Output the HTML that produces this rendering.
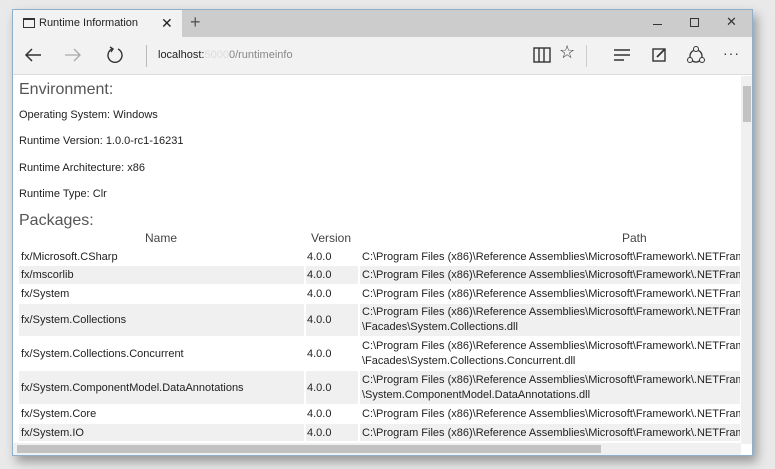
<!DOCTYPE html>
<html><head><style>
*{margin:0;padding:0;box-sizing:border-box}
body{width:775px;height:469px;background:#e9e9e9;font-family:"Liberation Sans",sans-serif;position:relative;overflow:hidden;color:#222}
.win{position:absolute;left:12px;top:9px;width:741px;height:447px;background:#fff;border:1px solid #8fb0cc;box-shadow:4px 6px 10px rgba(0,0,0,.35)}
.tabbar{position:absolute;left:0;top:0;width:739px;height:27px;background:#ccc}
.tab{position:absolute;left:0;top:0;width:169px;height:27px;background:#f2f2f2;font-size:11px;color:#222}
.addr{position:absolute;left:0;top:27px;width:739px;height:38px;background:#f2f2f2;border-bottom:1px solid #ddd}
.a{position:absolute;white-space:nowrap}
.c{position:absolute;font-size:11px;white-space:nowrap;line-height:15px}
.h{position:absolute;font-size:16px;color:#555;font-weight:300}
.g{position:absolute;background:#f0f0f0}
</style></head><body>
<div class="win">
 <div class="tabbar">
  <div class="tab">
   <div class="a" style="left:10px;top:8px;width:12px;height:10px;border:1px solid #333;border-top-width:2px"></div>
   <div class="a" style="left:26px;top:7px">Runtime Information</div>
   <div class="a" style="left:148px;top:5px;font-size:14px">✕</div>
  </div>
  <div class="a" style="left:177px;top:2px;font-size:18px;color:#555">+</div>
  <div class="a" style="left:640px;top:14px;width:9px;height:1px;background:#333"></div>
  <div class="a" style="left:677px;top:8px;width:9px;height:9px;border:1px solid #333"></div>
  <div class="a" style="left:713px;top:4px;font-size:13px;color:#333">✕</div>
 </div>
 <div class="addr">
  <svg class="a" style="left:10px;top:9px" width="20" height="18"><path d="M18 9H3M9 3L3 9l6 6" stroke="#333" stroke-width="1.5" fill="none"/></svg>
  <svg class="a" style="left:50px;top:9px" width="20" height="18"><path d="M2 9h15M11 3l6 6-6 6" stroke="#aaa" stroke-width="1.3" fill="none"/></svg>
  <svg class="a" style="left:92px;top:8px" width="20" height="20"><path d="M7 4A7 7 0 1 0 13 4" stroke="#333" stroke-width="1.4" fill="none"/><path d="M5 2l3 2-2 3" stroke="#333" stroke-width="1.4" fill="none"/></svg>
  <div class="a" style="left:133px;top:8px;width:1px;height:22px;background:#bbb"></div>
  <div class="a" style="left:145px;top:12px;font-size:11px"><span style="color:#222">localhost:</span><span style="color:#ddd">5000</span><span style="color:#888">0/runtimeinfo</span></div>
  <svg class="a" style="left:520px;top:10px" width="18" height="16"><rect x="1" y="1" width="16" height="14" fill="none" stroke="#333" stroke-width="1.4"/><path d="M6 1v14M11 1v14" stroke="#333" stroke-width="1.4"/></svg>
  <div class="a" style="left:546px;top:5px;font-size:18px;color:#333">☆</div>
  <div class="a" style="left:573px;top:8px;width:1px;height:22px;background:#ccc"></div>
  <svg class="a" style="left:600px;top:11px" width="18" height="14"><path d="M1 2h16M1 7h16M1 12h10" stroke="#333" stroke-width="1.4"/></svg>
  <svg class="a" style="left:639px;top:10px" width="16" height="16"><rect x="1" y="2" width="12" height="12" fill="none" stroke="#333" stroke-width="1.4"/><path d="M5 10l8-8" stroke="#333" stroke-width="1.8"/></svg>
  <svg class="a" style="left:673px;top:8px" width="20" height="20"><circle cx="10" cy="11" r="6" fill="none" stroke="#333" stroke-width="1.3"/><circle cx="10" cy="4" r="2.5" fill="#f2f2f2" stroke="#333"/><circle cx="4" cy="15" r="2.5" fill="#f2f2f2" stroke="#333"/><circle cx="16" cy="15" r="2.5" fill="#f2f2f2" stroke="#333"/></svg>
  <div class="a" style="left:710px;top:8px;font-size:14px;color:#333;letter-spacing:1px">···</div>
 </div>
 <div class="a" style="left:728px;top:66px;width:11px;height:368px;background:#f0f0f0"></div>
 <div class="a" style="left:730px;top:76px;width:8px;height:36px;background:#c2c2c2"></div>
 <div class="a" style="left:0;top:433px;width:728px;height:12px;background:#f0f0f0"></div>
 <div class="a" style="left:4px;top:435px;width:584px;height:8px;background:#c2c2c2"></div>
</div>
<div class="h" style="left:19px;top:81px">Environment:</div>
<div class="c" style="left:19px;top:108px">Operating System: Windows</div>
<div class="c" style="left:19px;top:134px">Runtime Version: 1.0.0-rc1-16231</div>
<div class="c" style="left:19px;top:161px">Runtime Architecture: x86</div>
<div class="c" style="left:19px;top:187px">Runtime Type: Clr</div>
<div class="h" style="left:19px;top:212px">Packages:</div>
<div class="c" style="left:145px;top:231px;font-size:12px;color:#444">Name</div>
<div class="c" style="left:311px;top:231px;font-size:12px;color:#444">Version</div>
<div class="c" style="left:622px;top:231px;font-size:12px;color:#444">Path</div>
<div class="g" style="left:19px;top:266px;width:285px;height:18px"></div><div class="g" style="left:306px;top:266px;width:52px;height:18px"></div><div class="g" style="left:360px;top:266px;width:380px;height:18px"></div>
<div class="g" style="left:19px;top:304px;width:285px;height:32px"></div><div class="g" style="left:306px;top:304px;width:52px;height:32px"></div><div class="g" style="left:360px;top:304px;width:380px;height:32px"></div>
<div class="g" style="left:19px;top:371px;width:285px;height:33px"></div><div class="g" style="left:306px;top:371px;width:52px;height:33px"></div><div class="g" style="left:360px;top:371px;width:380px;height:33px"></div>
<div class="g" style="left:19px;top:424px;width:285px;height:17px"></div><div class="g" style="left:306px;top:424px;width:52px;height:17px"></div><div class="g" style="left:360px;top:424px;width:380px;height:17px"></div>
<div style="position:absolute;left:0;top:0;width:740px;height:441px;overflow:hidden">
<div class="c" style="left:21px;top:250px">fx/Microsoft.CSharp</div><div class="c" style="left:307px;top:250px">4.0.0</div><div class="c" style="left:362px;top:250px">C:\Program Files (x86)\Reference Assemblies\Microsoft\Framework\.NETFramework</div>
<div class="c" style="left:21px;top:268px">fx/mscorlib</div><div class="c" style="left:307px;top:268px">4.0.0</div><div class="c" style="left:362px;top:268px">C:\Program Files (x86)\Reference Assemblies\Microsoft\Framework\.NETFramework</div>
<div class="c" style="left:21px;top:287px">fx/System</div><div class="c" style="left:307px;top:287px">4.0.0</div><div class="c" style="left:362px;top:287px">C:\Program Files (x86)\Reference Assemblies\Microsoft\Framework\.NETFramework</div>
<div class="c" style="left:21px;top:313px">fx/System.Collections</div><div class="c" style="left:307px;top:313px">4.0.0</div><div class="c" style="left:362px;top:305px">C:\Program Files (x86)\Reference Assemblies\Microsoft\Framework\.NETFramework<br>\Facades\System.Collections.dll</div>
<div class="c" style="left:21px;top:347px">fx/System.Collections.Concurrent</div><div class="c" style="left:307px;top:347px">4.0.0</div><div class="c" style="left:362px;top:339px">C:\Program Files (x86)\Reference Assemblies\Microsoft\Framework\.NETFramework<br>\Facades\System.Collections.Concurrent.dll</div>
<div class="c" style="left:21px;top:381px">fx/System.ComponentModel.DataAnnotations</div><div class="c" style="left:307px;top:381px">4.0.0</div><div class="c" style="left:362px;top:373px">C:\Program Files (x86)\Reference Assemblies\Microsoft\Framework\.NETFramework<br>\System.ComponentModel.DataAnnotations.dll</div>
<div class="c" style="left:21px;top:407px">fx/System.Core</div><div class="c" style="left:307px;top:407px">4.0.0</div><div class="c" style="left:362px;top:407px">C:\Program Files (x86)\Reference Assemblies\Microsoft\Framework\.NETFramework</div>
<div class="c" style="left:21px;top:426px">fx/System.IO</div><div class="c" style="left:307px;top:426px">4.0.0</div><div class="c" style="left:362px;top:426px">C:\Program Files (x86)\Reference Assemblies\Microsoft\Framework\.NETFramework</div>
</div>
</body></html>
